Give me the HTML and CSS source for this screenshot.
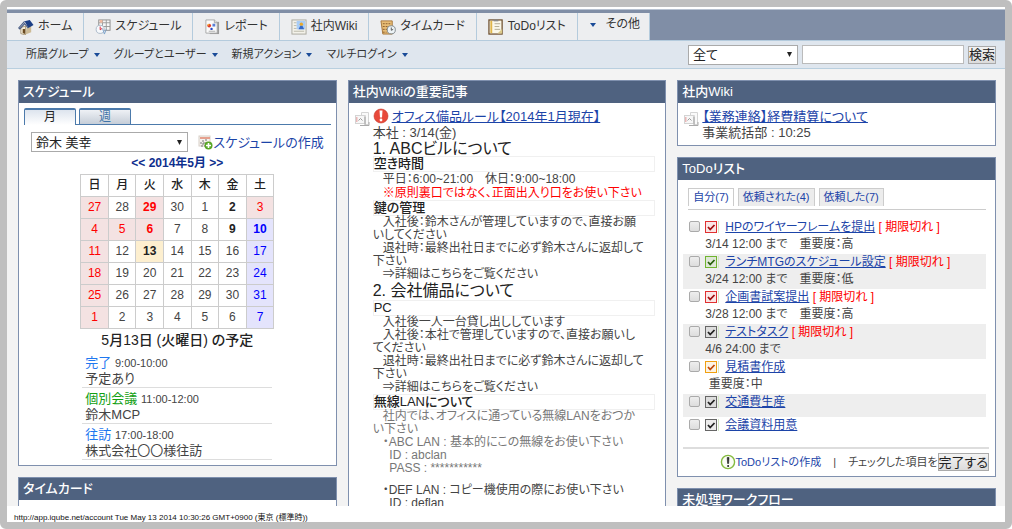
FILE: index.html
```html
<!DOCTYPE html>
<html lang="ja">
<head>
<meta charset="utf-8">
<meta name="viewport" content="width=device-width, initial-scale=1">
<title>ホーム</title>
<link rel="stylesheet" href="styles.css">
</head>
<body>
<svg class="defs" aria-hidden="true">
  <defs>
    <symbol id="i-home" viewBox="0 0 17 17"><path d="M3 9v6.500l5 1.500V7.500z" fill="#f5edd8" stroke="#8d7650" stroke-width=".7"/><path d="M8 16.500l6-2.500V8L10 3z" fill="#cdbb96"/><path d="M5 10.500h2.500v5.500L5 15z" fill="#6a4a20"/><path d="M7 2.500l5.500-1.500 4 5.500-5.500 3z" fill="#1c3f86"/><path d="M7 2.500L.8 9.500l1.200 1 5-5.500 4 4.800" fill="none" stroke="#4a5d85" stroke-width="1.200"/></symbol>
    <symbol id="i-cal" viewBox="0 0 17 17"><rect x="4" y="1" width="12" height="11" fill="#f7f7f7" stroke="#8c8c8c"/><path d="M4 4h12M8 1v11M12 1v11M4 8h12" stroke="#9a9a9a"/><path d="M5 1h3v3H5z" fill="#f0b9a0"/><circle cx="5.500" cy="11" r="4.300" fill="#f6f9fc" stroke="#a9b7c8"/><path d="M5.500 8v3.500l2-1.500" stroke="#d23" fill="none"/><path d="M8 10l2 6 2-5" fill="none" stroke="#7ba2cc"/></symbol>
    <symbol id="i-report" viewBox="0 0 17 17"><path d="M6 3h10v13H6z" fill="#9a9a9a"/><path d="M2 1h9l3 3v11H2z" fill="#fbfbfb" stroke="#a8a8a8"/><path d="M11 1v3h3" fill="#ddd" stroke="#a8a8a8"/><circle cx="5.500" cy="7" r="2" fill="#e03a2a"/><path d="M5.500 5a2 2 0 0 0-2 2h2z" fill="#f2b632"/><path d="M9 5h3v3H9z" fill="#5b7fd6"/><circle cx="8" cy="10.500" r="1.300" fill="#2847c8"/><path d="M5 13h7" stroke="#aaa"/></symbol>
    <symbol id="i-wiki" viewBox="0 0 17 17"><rect x="1" y="1" width="15" height="15" fill="#f4f2ea" stroke="#a9a79d"/><path d="M3 4h3M3 7h3M3 10h3M3 13h11" stroke="#b9b6a8"/><rect x="6" y="2" width="9" height="9" fill="#a9cdf6"/><path d="M8 11l2-4h2l2 4" fill="#3469c7"/><circle cx="11" cy="5.500" r="1.800" fill="#e9a92c"/></symbol>
    <symbol id="i-time" viewBox="0 0 17 17"><path d="M1 2h12v14H3z" fill="#e8bd76" stroke="#a6753a"/><path d="M3 5h8M3 8h8M3 11h6M3 14h4" stroke="#8b5d2c" stroke-dasharray="2 1"/><circle cx="12" cy="11.500" r="4.300" fill="#edf3f6" stroke="#7f878c"/><path d="M12 9v3l2-1" fill="none" stroke="#555"/></symbol>
    <symbol id="i-todo" viewBox="0 0 17 17"><rect x="1" y="1" width="14" height="15" fill="#fbf8ea" stroke="#6a4a2a" stroke-width="1.300"/><path d="M3.500 2v13" stroke="#e0b649" stroke-width="2"/><path d="M7 5h6M7 8h5M7 11h6" stroke="#b0aa90"/><path d="M10 15.500l5-5v5z" fill="#dcca8a"/><path d="M6 1.500h5" stroke="#888" stroke-width="2"/></symbol>
    <symbol id="i-page" viewBox="0 0 16 16"><path d="M7.500 1.500h7v12h-3v-9h-4z" fill="#fafafa" stroke="#d4d4d4"/><rect x="1.500" y="4.500" width="9" height="8" fill="#f7f7f7" stroke="#d4d4d4"/><path d="M2 6h1.500v5H2z" fill="#eab7b7"/><path d="M4.500 9.500l2-2 2 2" fill="none" stroke="#999"/><path d="M11 6v8.500M6 14.500h9V11" stroke="#aaa" fill="none"/></symbol>
    <symbol id="i-alert" viewBox="0 0 16 16"><circle cx="8" cy="8" r="7" fill="#e8493a" stroke="#c43628" stroke-width=".6"/><path d="M6.500 2.500h3L9 9.500H7z" fill="#fff"/><circle cx="8" cy="12" r="1.400" fill="#fff"/></symbol>
    <symbol id="i-caladd" viewBox="0 0 16 16"><rect x="1" y="2" width="11" height="10" fill="#f6f2ee" stroke="#d8cfc8"/><path d="M2 4h10" stroke="#e6a08e" stroke-width="2"/><path d="M5 6v6M8 5v5M2 9h8M3 12h5" stroke="#777" stroke-dasharray="2 1"/><circle cx="10.500" cy="11.500" r="4" fill="#58a626"/><path d="M10.500 9v5M8 11.500h5" stroke="#fff" stroke-width="1.600"/></symbol>
    <symbol id="i-info" viewBox="0 0 16 16"><circle cx="8" cy="8" r="6.600" fill="#fbfdf6" stroke="#85ba3f" stroke-width="1.400"/><path d="M7.200 3.500h1.800L8.600 9.500h-1z" fill="#222" stroke="#222" stroke-width=".6"/><circle cx="8.100" cy="12" r="1" fill="#222"/></symbol>
    <symbol id="i-check" viewBox="0 0 15 13"><rect x=".5" y=".5" width="11" height="11" fill="currentColor" fill-opacity=".12" stroke="currentColor"/><path d="M13.500 0v12" stroke="#d5e8c5" stroke-width="1"/><path d="M3 6l2.200 2.500L9.500 4" fill="none" stroke="var(--tick)" stroke-width="1.800"/></symbol>
  </defs>
</svg>
<div class="frame">
  <header>
    <nav class="tabs">
      <a href="#"><svg class="ic"><use href="#i-home"/></svg>ホーム</a>
      <a href="#"><svg class="ic"><use href="#i-cal"/></svg>スケジュール</a>
      <a href="#"><svg class="ic"><use href="#i-report"/></svg>レポート</a>
      <a href="#"><svg class="ic"><use href="#i-wiki"/></svg>社内Wiki</a>
      <a href="#"><svg class="ic"><use href="#i-time"/></svg>タイムカード</a>
      <a href="#"><svg class="ic"><use href="#i-todo"/></svg>ToDoリスト</a>
      <a href="#" class="more"><i class="caret"></i>その他</a>
    </nav>
    <div class="subbar">
      <nav class="menus">
        <a href="#">所属グループ<i class="caret"></i></a>
        <a href="#">グループとユーザー<i class="caret"></i></a>
        <a href="#">新規アクション<i class="caret"></i></a>
        <a href="#">マルチログイン<i class="caret"></i></a>
      </nav>
      <form class="search">
        <select aria-label="検索対象"><option>全て</option></select>
        <input type="text" aria-label="検索語">
        <button type="button">検索</button>
      </form>
    </div>
  </header>
  <main>
    <div class="column">
      <section class="card">
        <h2>スケジュール</h2>
        <div class="schedule">
          <div class="viewtabs"><button type="button" class="on">月</button><button type="button">週</button></div>
          <div class="person">
            <select aria-label="ユーザー"><option>鈴木 美幸</option></select>
            <a href="#"><svg class="ic"><use href="#i-caladd"/></svg>スケジュールの作成</a>
          </div>
          <div class="month"><a href="#">&lt;&lt;</a> <span>2014年5月</span> <a href="#">&gt;&gt;</a></div>
          <table class="calendar">
            <thead><tr><th>日</th><th>月</th><th>火</th><th>水</th><th>木</th><th>金</th><th>土</th></tr></thead>
            <tbody>
              <tr><td class="hol">27</td><td>28</td><td class="hol b">29</td><td>30</td><td>1</td><td class="b">2</td><td class="hol">3</td></tr>
              <tr><td class="hol">4</td><td class="hol">5</td><td class="hol b">6</td><td>7</td><td>8</td><td class="b">9</td><td class="sat b">10</td></tr>
              <tr><td class="hol">11</td><td>12</td><td class="today b">13</td><td>14</td><td>15</td><td>16</td><td class="sat">17</td></tr>
              <tr><td class="hol">18</td><td>19</td><td>20</td><td>21</td><td>22</td><td>23</td><td class="sat">24</td></tr>
              <tr><td class="hol">25</td><td>26</td><td>27</td><td>28</td><td>29</td><td>30</td><td class="sat">31</td></tr>
              <tr><td class="hol">1</td><td>2</td><td>3</td><td>4</td><td>5</td><td>6</td><td class="sat">7</td></tr>
            </tbody>
          </table>
          <h3>5月13日 (火曜日) の予定</h3>
          <ul class="events">
            <li><span class="blue">完了</span> <time>9:00-10:00</time><br>予定あり</li>
            <li><span class="green">個別会議</span> <time>11:00-12:00</time><br>鈴木MCP</li>
            <li><span class="blue">往訪</span> <time>17:00-18:00</time><br>株式会社〇〇様往訪</li>
          </ul>
        </div>
      </section>
      <section class="card"><h2>タイムカード</h2><div class="blank"></div></section>
    </div>
    <div class="column">
      <section class="card">
        <h2>社内Wikiの重要記事</h2>
        <article class="entry">
          <svg class="ic"><use href="#i-page"/></svg>
          <div class="text">
            <div class="headline"><svg class="ic"><use href="#i-alert"/></svg><a href="#">オフィス備品ルール【2014年1月現在】</a></div>
            <div class="meta">本社 : 3/14(金)</div>
            <h3>1. ABCビルについて</h3>
            <h4>空き時間</h4>
            <p class="roomy">平日：6:00~21:00　休日：9:00~18:00</p>
            <p class="roomy warn">※原則裏口ではなく、正面出入り口をお使い下さい</p>
            <h4>鍵の管理</h4>
            <p>入社後：鈴木さんが管理していますので、直接お願<br>いしてください</p>
            <p>退社時：最終出社日までに必ず鈴木さんに返却して<br>下さい</p>
            <p>⇒詳細はこちらをご覧ください</p>
            <h3 class="later">2. 会社備品について</h3>
            <h4>PC</h4>
            <p>入社後一人一台貸し出ししています</p>
            <p>入社後：本社で管理していますので、直接お願いし<br>てください</p>
            <p>退社時：最終出社日までに必ず鈴木さんに返却して<br>下さい</p>
            <p>⇒詳細はこちらをご覧ください</p>
            <h4>無線LANについて</h4>
            <p class="soft">社内では、オフィスに通っている無線LANをおつか<br>い下さい</p>
            <p class="soft">・ABC LAN : 基本的にこの無線をお使い下さい</p>
            <p class="soft">&nbsp;&nbsp;ID : abclan</p>
            <p class="soft">&nbsp;&nbsp;PASS : ***********</p>
            <p class="apart">・DEF LAN : コピー機使用の際にお使い下さい</p>
            <p>&nbsp;&nbsp;ID : deflan</p>
          </div>
        </article>
      </section>
    </div>
    <div class="column">
      <section class="card">
        <h2>社内Wiki</h2>
        <article class="entry short">
          <svg class="ic"><use href="#i-page"/></svg>
          <div class="text">
            <div class="headline"><a href="#">【業務連絡】経費精算について</a></div>
            <div class="meta">事業統括部 : 10:25</div>
          </div>
        </article>
      </section>
      <section class="card">
        <h2>ToDoリスト</h2>
        <div class="todo">
          <div class="filters"><button type="button" class="on">自分(7)</button><button type="button">依頼された(4)</button><button type="button">依頼した(7)</button></div>
          <ul class="tasks">
            <li><input type="checkbox" aria-labelledby="n1"><div><svg class="red"><use href="#i-check"/></svg><a href="#" id="n1">HPのワイヤーフレームを提出</a> <em>[ 期限切れ ]</em><p>3/14 12:00 まで　重要度：高</p></div></li>
            <li><input type="checkbox" aria-labelledby="n2"><div><svg class="lime"><use href="#i-check"/></svg><a href="#" id="n2">ランチMTGのスケジュール設定</a> <em>[ 期限切れ ]</em><p>3/24 12:00 まで　重要度：低</p></div></li>
            <li><input type="checkbox" aria-labelledby="n3"><div><svg class="red"><use href="#i-check"/></svg><a href="#" id="n3">企画書試案提出</a> <em>[ 期限切れ ]</em><p>3/28 12:00 まで　重要度：高</p></div></li>
            <li><input type="checkbox" aria-labelledby="n4"><div><svg><use href="#i-check"/></svg><a href="#" id="n4">テストタスク</a> <em>[ 期限切れ ]</em><p>4/6 24:00 まで</p></div></li>
            <li><input type="checkbox" aria-labelledby="n5"><div><svg class="gold"><use href="#i-check"/></svg><a href="#" id="n5">見積書作成</a><p>&nbsp;重要度：中</p></div></li>
            <li><input type="checkbox" aria-labelledby="n6"><div><svg><use href="#i-check"/></svg><a href="#" id="n6">交通費生産</a></div></li>
            <li><input type="checkbox" aria-labelledby="n7"><div><svg><use href="#i-check"/></svg><a href="#" id="n7">会議資料用意</a></div></li>
          </ul>
          <div class="actions"><a href="#"><svg class="ic"><use href="#i-info"/></svg>ToDoリストの作成</a><span class="bar">|</span><span>チェックした項目を</span><button type="button">完了する</button></div>
        </div>
      </section>
      <section class="card"><h2>未処理ワークフロー</h2></section>
    </div>
  </main>
  <footer>http://app.iqube.net/account Tue May 13 2014 10:30:26 GMT+0900 (東京 (標準時))</footer>
</div>
</body>
</html>
```
FILE: styles.css
```css
* { box-sizing: border-box; }
body {
  margin: 0;
  background: #fff;
  color: #444;
  font: 13px/13px "Liberation Sans", "Noto Sans CJK JP", sans-serif;
  font-feature-settings: "palt";
}
h2, h3, h4, p, ul { margin: 0; padding: 0; }
ul { list-style: none; }
a { color: #1c44a8; text-decoration: none; }
button, input, select { font: inherit; font-feature-settings: inherit; margin: 0; }
.defs { position: absolute; width: 0; height: 0; }
.ic { width: 16px; height: 16px; flex: none; }

.frame {
  display: flex;
  flex-direction: column;
  height: 100vh;
  padding-top: 2px;
  border: 7px solid #bfbfbf;
  border-radius: 6px;
  background: #fff;
}

.caret {
  border: 3px solid transparent;
  border-top: 4px solid #1a4b98;
  border-bottom: 0;
}

/* Main tabs */
.tabs {
  display: flex;
  padding-top: 3px;
  background: #808ea6;
  border-top: 1px solid #b7c2d1;
}
.tabs a {
  display: flex;
  align-items: center;
  gap: 4px;
  height: 27px;
  padding: 0 11px;
  background: #edeef0;
  border-right: 1px solid #b4cbdd;
  color: #333;
  font-size: 12px;
  white-space: nowrap;
}
.tabs .more { gap: 10px; padding: 0 9px 4px 12px; }

.subbar {
  display: flex;
  align-items: center;
  justify-content: space-between;
  height: 29px;
  padding: 0 9px 0 19px;
  background: #dfe6ee;
  border-top: 1px solid #b4cbdd;
  border-bottom: 1px solid #b9cfdf;
}
.menus { display: flex; gap: 14px; font-size: 11px; white-space: nowrap; }
.menus a { display: flex; align-items: center; gap: 5px; color: #333; }
.search { display: flex; align-items: center; gap: 4px; }
.search input { width: 162px; height: 19px; border: 1px solid #bbb; }

select {
  appearance: none;
  height: 20px;
  padding: 0 4px;
  border: 1px solid #aaa;
  border-radius: 0;
  color: #222;
  background: #fff url("data:image/svg+xml,%3Csvg xmlns='http://www.w3.org/2000/svg' width='5' height='5'%3E%3Cpath d='M0 0h5L2.500 5z' fill='%23222'/%3E%3C/svg%3E") no-repeat right 5px center;
}
.search select { width: 110px; }
.search button, .actions button {
  height: 18px;
  padding: 0;
  border: 1px solid #aaa;
  background: linear-gradient(#f3f3f3, #dcdcdc);
  color: #222;
  white-space: nowrap;
}

/* Dashboard columns */
main {
  flex: 1;
  min-height: 0;
  overflow: hidden;
  display: grid;
  grid-template-columns: repeat(3, minmax(0, 1fr));
  gap: 11px;
  padding: 11px 9px 0 11px;
  background: #f3f3f3;
}
.column { display: flex; flex-direction: column; gap: 11px; }
.card { background: #fff; border: 1px solid #7f90ae; }
.column > .card:last-child { flex: 1 0 auto; }
.card h2 {
  height: 22px;
  padding-left: 4px;
  background: #4f6280;
  color: #fff;
  font-size: 13px;
  font-weight: 500;
  line-height: 22px;
}
.blank { height: 10px; }

/* Schedule */
.schedule { padding: 5px; }
.viewtabs { display: flex; gap: 3px; border-bottom: 1px solid #4c7aab; }
.viewtabs button {
  width: 52px;
  height: 16px;
  padding: 0;
  border: 1px solid #4c7aab;
  border-top-width: 2px;
  border-bottom: 0;
  border-radius: 2px 2px 0 0;
  background: linear-gradient(#eef1f5, #c6ced8);
  color: #3f74a8;
  font-size: 12px;
  line-height: 13px;
}
.viewtabs .on { margin-bottom: -1px; height: 17px; background: linear-gradient(#dde4ee, #fff); color: #222; }
.person { display: flex; align-items: center; gap: 10px; padding: 7px 7px 0; }
.person select { flex: 1; min-width: 0; max-width: 159px; }
.person a { display: flex; align-items: center; white-space: nowrap; }
.month { padding: 4px 0; text-align: center; color: #0e2f8e; font-size: 12px; font-weight: 700; line-height: 14px; }
.month a { color: inherit; }
.calendar { width: 194px; margin: 0 auto; border-collapse: collapse; table-layout: fixed; font-size: 12px; }
.calendar th, .calendar td { height: 22px; padding: 0; border: 1px solid #ccc; text-align: center; }
.calendar th { color: #222; font-weight: 500; }
.calendar .hol { background: #f4e2e2; color: #f00; }
.calendar .sat { background: #e4e4fc; color: #00f; }
.calendar .today { background: #fdefcf; color: #222; }
.calendar .b { font-weight: 700; }
.calendar .b:not(.hol):not(.sat) { color: #222; }
.schedule h3 { padding: 3px 0 4px; text-align: center; color: #222; font-size: 14px; font-weight: 500; line-height: 16px; }
.events { width: 190px; margin: 0 auto; }
.events li { padding: 3px 3px 1px; border-bottom: 1px solid #ddd; line-height: 15px; }
.events time { font-size: 11px; }
.blue { color: #1f78f0; }
.green { color: #12a012; }

/* Wiki entries */
.entry { display: flex; gap: 3px; padding: 5px 10px 10px 5px; }
.entry.short { padding-bottom: 4px; }
.entry > .ic { margin-top: 3px; }
.entry .text { flex: 1; min-width: 0; }
.headline { display: flex; align-items: center; gap: 3px; height: 16px; white-space: nowrap; }
.headline a { text-decoration: underline; }
.meta { line-height: 17px; }
.entry h3 { color: #222; font-size: 16px; font-weight: 400; line-height: 15px; }
.entry .later { padding: 2px 0; }
.entry h4 { padding-bottom: 1px; color: #222; font-size: 13px; font-weight: 500; line-height: 13px; border: 1px solid #f0f0f0; }
.entry p { font-size: 12px; text-indent: 10px; white-space: nowrap; }
.entry .roomy { line-height: 14px; }
.entry .apart { margin-top: 9px; }
.entry .warn { color: #f00; }
.entry .soft { color: #777; }

/* ToDo */
.todo { padding: 8px 9px 5px 5px; font-size: 12px; }
.filters { display: flex; gap: 4px; margin: 0 0 9px 5px; padding-bottom: 3px; border-bottom: 1px solid #ccc; }
.filters button { height: 18px; padding: 0 4px; border: 1px solid #ccc; border-bottom: 0; background: #ececec; color: #1c44a8; font-size: 11px; white-space: nowrap; }
.filters .on { background: #fff; }
.tasks li { display: flex; align-items: flex-start; gap: 5px; padding: 0 0 1px 6px; line-height: 17px; min-height: 23px; white-space: nowrap; }
.tasks li:nth-child(even) { background: #eee; }
.tasks svg { width: 15px; height: 13px; margin-right: 5px; vertical-align: -3px; color: #666; --tick: #222; }
.tasks .red { color: #e03030; --tick: #a01010; }
.tasks .lime { color: #70b430; --tick: #28600c; }
.tasks .gold { color: #f0a010; --tick: #c04808; }
.tasks a { text-decoration: underline; }
.tasks em { color: #f00; font-style: normal; }
.tasks input {
  appearance: none;
  width: 11px;
  height: 11px;
  margin-top: 2px;
  border: 1px solid #aaa;
  border-radius: 2px;
  background: linear-gradient(#eee, #ddd);
}
.actions { display: flex; align-items: center; justify-content: flex-end; margin-top: 7px; margin-right: -3px; padding-top: 4px; border-top: 2px solid #ddd; font-size: 11px; white-space: nowrap; }
.actions a { display: flex; align-items: center; }
.actions .bar { padding: 0 12px; }
.actions button { font-size: 13px; }

footer { height: 16px; padding: 0 7px; color: #111; font-size: 8px; line-height: 24px; white-space: nowrap; }
```
